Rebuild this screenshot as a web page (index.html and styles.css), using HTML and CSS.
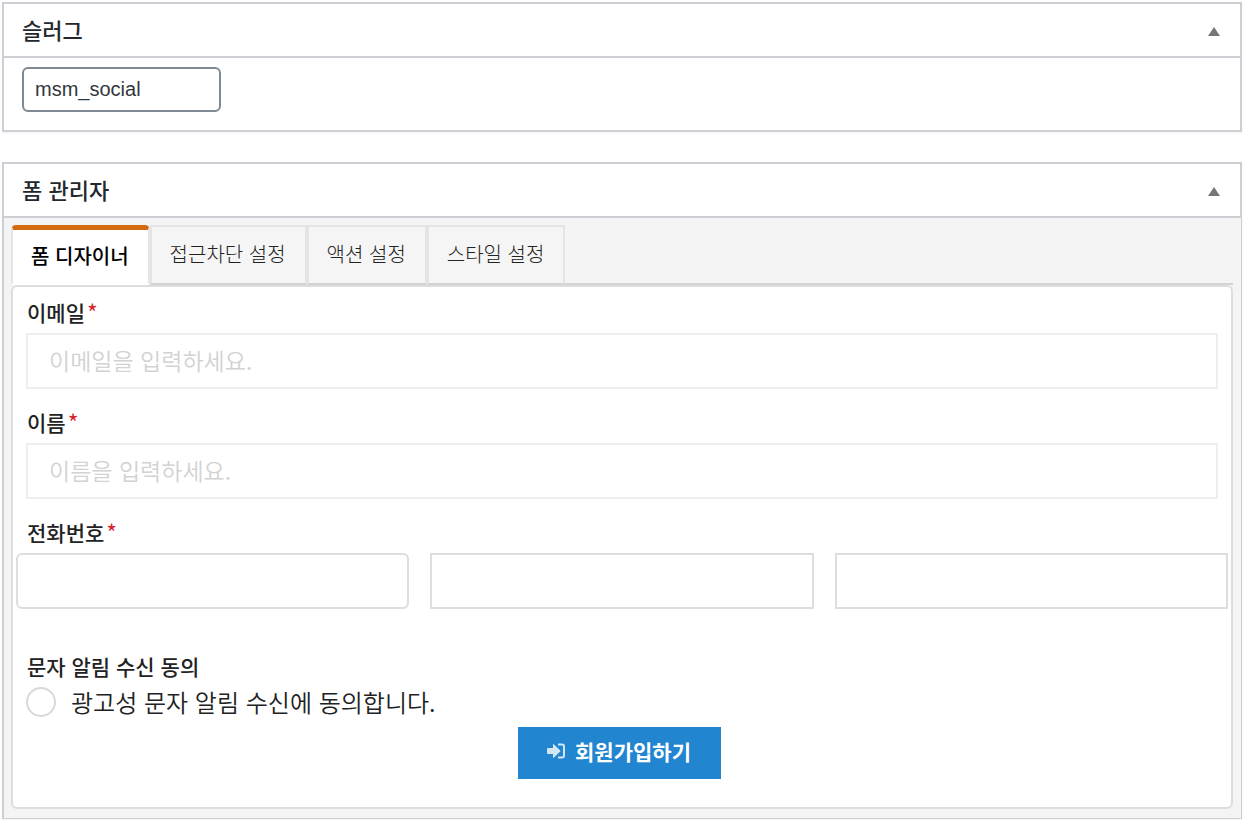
FILE: index.html
```html
<!DOCTYPE html>
<html lang="ko">
<head>
<meta charset="utf-8">
<title>폼 관리자</title>
<link rel="stylesheet" href="styles.css">
</head>
<body>
<main class="page">
  <section class="box">
    <header class="box-header">
      <h2 class="box-title"><label for="slug">슬러그</label></h2>
      <button class="toggle" type="button" aria-label="접기"><svg class="toggle-icon" viewBox="0 0 12 9" aria-hidden="true"><path d="M6 0L12 9H0Z"/></svg></button>
    </header>
    <div class="box-body">
      <input class="slug-input" id="slug" type="text" value="msm_social">
    </div>
  </section>

  <section class="box">
    <header class="box-header">
      <h2 class="box-title">폼 관리자</h2>
      <button class="toggle" type="button" aria-label="접기"><svg class="toggle-icon" viewBox="0 0 12 9" aria-hidden="true"><path d="M6 0L12 9H0Z"/></svg></button>
    </header>
    <div class="box-body box-body-form">
      <div class="tabs" role="tablist">
        <button class="tab tab-active" type="button" role="tab" aria-selected="true">폼 디자이너</button>
        <button class="tab" type="button" role="tab">접근차단 설정</button>
        <button class="tab" type="button" role="tab">액션 설정</button>
        <button class="tab" type="button" role="tab">스타일 설정</button>
      </div>
      <form class="panel">
        <div class="field">
          <label class="label" for="email">이메일<span class="required">*</span></label>
          <input class="input" id="email" type="text" placeholder="이메일을 입력하세요.">
        </div>
        <div class="field">
          <label class="label" for="name">이름<span class="required">*</span></label>
          <input class="input" id="name" type="text" placeholder="이름을 입력하세요.">
        </div>
        <div class="field">
          <label class="label" id="phone-label" for="phone1">전화번호<span class="required">*</span></label>
          <div class="phone">
            <input class="input phone-input phone-first" id="phone1" type="tel">
            <input class="input phone-input" type="tel" aria-labelledby="phone-label">
            <input class="input phone-input" type="tel" aria-labelledby="phone-label">
          </div>
        </div>
        <div class="field field-agree">
          <span class="label" id="agree-label">문자 알림 수신 동의</span>
          <label class="choice"><input class="radio" type="radio" name="agree" aria-describedby="agree-label"><span>광고성 문자 알림 수신에 동의합니다.</span></label>
        </div>
        <div class="actions">
          <button class="submit" type="button">
            <svg class="submit-icon" viewBox="0 0 18 16" aria-hidden="true"><path class="arrow" d="M1 5H6V1.800Q6 .6 7 1.400L13 7.200Q13.800 8 13 8.800L7 14.600Q6 15.400 6 14.200V11H1Q0 11 0 10V6Q0 5 1 5Z"/><path class="door" d="M11 1.500H15Q17 1.500 17 3.500V12.500Q17 14.500 15 14.500H11"/></svg>
            <span>회원가입하기</span>
          </button>
        </div>
      </form>
    </div>
  </section>
</main>
</body>
</html>
```
FILE: styles.css
```css
* { box-sizing: border-box; }

body {
  margin: 0;
  background: #fff;
  color: #222;
  font-family: "Noto Sans CJK KR", sans-serif;
}

button, input { font-family: inherit; margin: 0; }

.page {
  display: flex;
  flex-direction: column;
  gap: 30px;
  padding: 2px;
}

.box { box-shadow: 0 1px 2px rgba(0, 0, 0, 0.06); }

.box-header {
  display: flex;
  align-items: center;
  justify-content: space-between;
  padding: 9px 18px 11px;
  border: 2px solid #ccd0d4;
}

.box-title {
  margin: 0;
  color: #23282d;
  font-size: 22px;
  font-weight: 500;
  line-height: 32px;
}

.toggle {
  display: flex;
  padding: 5px 2px 0 0;
  border: 0;
  background: none;
}

.toggle-icon { width: 12px; height: 9px; fill: #72777c; }

.box-body {
  padding: 9px 18px 18px;
  border: 2px solid #ccd0d4;
  border-top: 0;
}

.slug-input {
  display: block;
  width: 199px;
  height: 45px;
  padding: 0 11px;
  border: 2px solid #7e8993;
  border-radius: 6px;
  background: #fff;
  color: #32373c;
  font-family: "Liberation Sans", sans-serif;
  font-size: 20px;
}

.box-body-form {
  padding: 7px 8px 9px 7px;
  border-right-width: 1px;
  border-bottom-width: 1px;
  background: #f4f4f4;
}

.tabs {
  display: flex;
  height: 60px;
  border-bottom: 2px solid #d2d2d2;
}

.tab {
  height: 60px;
  padding: 0 19px 2px 18px;
  border: 2px solid #e4e4e4;
  border-bottom-color: #d2d2d2;
  background: #f5f5f5;
  color: #222;
  font-size: 20px;
  font-weight: 300;
  line-height: 30px;
}

.tab-active {
  border-top: 5px solid #d46a10;
  border-bottom-color: #fff;
  border-radius: 5px 5px 0 0;
  background: #fff;
  color: #000;
  font-weight: 500;
}

.panel {
  padding: 14px 13px 28px;
  border: 2px solid #ddd;
  border-radius: 6px;
  background: #fff;
}

.field {
  display: flex;
  flex-direction: column;
  gap: 10px;
  margin-bottom: 22px;
}

.label {
  padding-left: 1px;
  font-size: 21px;
  font-weight: 500;
  line-height: 22px;
}

.required {
  margin-left: 2px;
  color: #d9232a;
  font-weight: 400;
  font-size: 23px;
  line-height: 0;
  vertical-align: -1px;
}

.input {
  width: 100%;
  height: 56px;
  padding: 0 21px 2px;
  border: 2px solid #eee;
  background: #fff;
  color: #222;
  font-size: 23px;
}

.input::placeholder { color: #d2d2d2; font-weight: 350; }

.phone {
  display: grid;
  grid-template-columns: 393fr 384fr 393fr;
  gap: 21px;
  margin: 0 -10px;
}

.phone-input { border-color: #ddd; }
.phone-first { border-radius: 6px; }

.field-agree { margin: 46px 0 10px; }

.choice {
  display: flex;
  align-items: center;
  gap: 15px;
  font-size: 24px;
  font-weight: 350;
  line-height: 30px;
}

.radio {
  appearance: none;
  width: 30px;
  height: 30px;
  border: 2px solid #d8d8d8;
  border-radius: 50%;
  background: #fff;
}

.actions {
  display: flex;
  justify-content: center;
  padding-right: 5px;
}

.submit {
  display: flex;
  align-items: center;
  gap: 10px;
  height: 52px;
  padding: 0 30px 4px 29px;
  border: 0;
  background: #2185d0;
  color: #fff;
  font-size: 21px;
  font-weight: 700;
}

.submit-icon { width: 18px; height: 16px; opacity: 0.8; }
.arrow { fill: #fff; }
.door { fill: none; stroke: #fff; stroke-width: 2; }
```
